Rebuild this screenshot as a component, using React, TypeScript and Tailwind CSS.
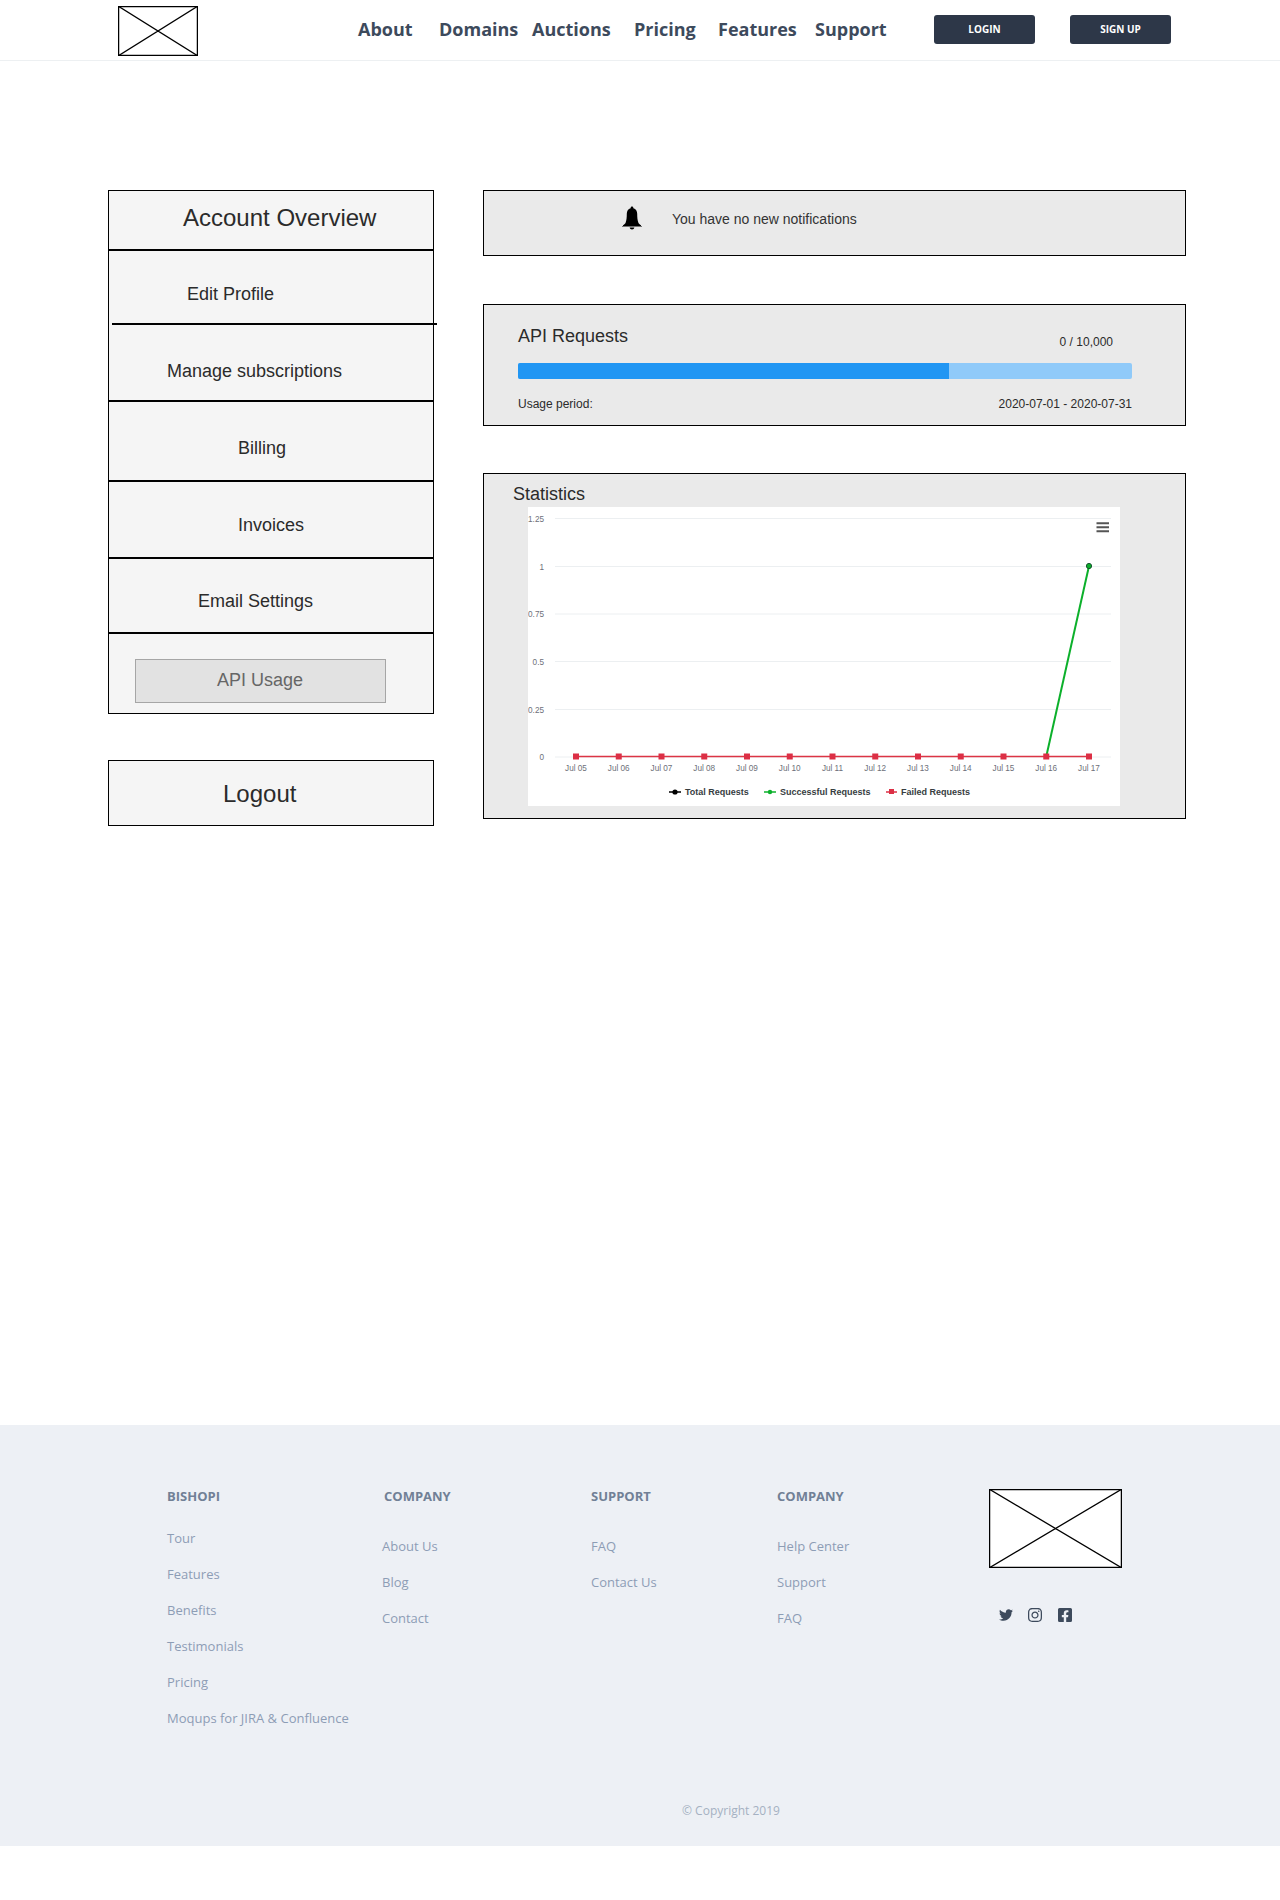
import { FaFacebookSquare, FaInstagram, FaTwitter } from "react-icons/fa";

const days = ["Jul 05", "Jul 06", "Jul 07", "Jul 08", "Jul 09", "Jul 10", "Jul 11", "Jul 12", "Jul 13", "Jul 14", "Jul 15", "Jul 16", "Jul 17"];
const yTicks = [
  { label: "1.25", y: 11.5 },
  { label: "1", y: 59.5 },
  { label: "0.75", y: 107 },
  { label: "0.5", y: 154.5 },
  { label: "0.25", y: 202.5 },
  { label: "0", y: 250 },
];

function Placeholder({ className }: { className: string }) {
  return (
    <svg className={className} viewBox="0 0 100 100" preserveAspectRatio="none">
      <rect x="0" y="0" width="100" height="100" fill="#fff" stroke="#000" strokeWidth="2.5" vectorEffect="non-scaling-stroke" />
      <path d="M0 0L100 100M100 0L0 100" stroke="#000" strokeWidth="1.3" vectorEffect="non-scaling-stroke" fill="none" />
    </svg>
  );
}

function Bell({ className }: { className: string }) {
  return (
    <svg className={className} viewBox="0 0 20 24" fill="#000">
      <path d="M8.6 2.2C8.6 1.2 9.2.5 10 .5s1.4.7 1.4 1.7c2.5.7 3.8 2.8 3.8 5.6 0 3.4.3 6.6 1.2 9 .4 1 1.4 1.8 2.6 2.5v.7H1v-.7c1.2-.7 2.2-1.5 2.6-2.5.9-2.4 1.2-5.6 1.2-9 0-2.8 1.3-4.9 3.8-5.6z" />
      <rect x="0" y="20" width="20" height="0.8" fill="#555" />
      <path d="M7.6 21.6h4.8c-.3 1.2-1.2 2-2.4 2s-2.1-.8-2.4-2z" />
    </svg>
  );
}

function Chart() {
  const xAt = (i: number) => 48 + i * 42.75;
  return (
    <svg className="block w-[592px] h-[299px] bg-white" viewBox="0 0 592 299" fontFamily="'Liberation Sans', sans-serif">
      {yTicks.map((t) => (
        <g key={t.label}>
          <line x1="27" x2="583" y1={t.y} y2={t.y} stroke="#eceff1" />
          <text x="16" y={t.y + 3} textAnchor="end" fontSize="8.2" fill="#6e7079">{t.label}</text>
        </g>
      ))}
      {days.map((d, i) => (
        <text key={d} x={xAt(i)} y="264" textAnchor="middle" fontSize="8.2" fill="#6e7079">{d}</text>
      ))}
      <line x1="48" x2="561" y1="249.5" y2="249.5" stroke="#dc3545" strokeWidth="1.5" />
      <line x1={xAt(11)} y1="249.5" x2={xAt(12)} y2="59" stroke="#0cb02b" strokeWidth="2" />
      {days.map((d, i) => (
        <rect key={d} x={xAt(i) - 3} y="246.5" width="6" height="6" fill="#dc2f45" />
      ))}
      <circle cx={xAt(12)} cy="59" r="2.6" fill="#0cb02b" stroke="#14532d" />

      <g fontSize="9" fontWeight="700" fill="#373d3f">
        <line x1="141" x2="153" y1="285" y2="285" stroke="#000" strokeWidth="1.5" />
        <circle cx="147" cy="285" r="2.6" fill="#000" />
        <text x="157" y="288">Total Requests</text>
        <line x1="236" x2="248" y1="285" y2="285" stroke="#0cb02b" strokeWidth="1.5" />
        <circle cx="242" cy="285" r="2.2" fill="#0cb02b" />
        <text x="252" y="288">Successful Requests</text>
        <line x1="358" x2="369" y1="285" y2="285" stroke="#dc2f45" strokeWidth="1.5" />
        <rect x="361" y="282" width="5" height="5" fill="#dc2f45" />
        <text x="373" y="288">Failed Requests</text>
      </g>

      <path d="M568.5 16.3h12.5M568.5 20.3h12.5M568.5 24.3h12.5" stroke="#555" strokeWidth="2" />
    </svg>
  );
}

function FooterColumn({ title, links, className, listClassName }: { title: string; links: string[]; className: string; listClassName: string }) {
  return (
    <div className={className}>
      <h4 className="text-[13px] leading-[18px] font-bold text-[#718096]">{title}</h4>
      <ul className={`flex flex-col gap-[18px] text-[13px] leading-[18px] text-[#8d9db5] ${listClassName}`}>
        {links.map((l) => (
          <li key={l}>{l}</li>
        ))}
      </ul>
    </div>
  );
}

export default function App() {
  return (
    <div className="w-[1280px] min-h-[1900px] bg-white font-['Liberation_Sans',Arial,sans-serif]">
      {/* Header */}
      <header className="h-[61px] border-b border-[#edf0f2] flex items-start pl-[118px] font-['Open_Sans',sans-serif]">
        <Placeholder className="w-[80px] h-[50px] mt-[6px] shrink-0" />
        <nav className="flex ml-[160px] mt-[17px] text-[18px] leading-[24px] font-bold text-[#3d4a5c]">
          <a className="w-[81px]">About</a>
          <a className="w-[93px]">Domains</a>
          <a className="w-[102px]">Auctions</a>
          <a className="w-[84px]">Pricing</a>
          <a className="w-[97px]">Features</a>
          <a className="w-[119px]">Support</a>
        </nav>
        <button className="w-[101px] h-[29px] mt-[15px] rounded-[3px] bg-[#2d3748] text-white text-[10px] font-bold">LOGIN</button>
        <button className="w-[101px] h-[29px] mt-[15px] ml-[35px] rounded-[3px] bg-[#2d3748] text-white text-[10px] font-bold">SIGN UP</button>
      </header>

      {/* Main */}
      <main className="h-[1364px] pt-[129px] pl-[108px] flex items-start text-[#2b2b2b]">
        {/* Sidebar */}
        <aside className="w-[326px] shrink-0">
          <div className="border border-black bg-[#f5f5f5] h-[524px] text-[18px] leading-[22px]">
            <div className="h-[60px] border-b-2 border-black pl-[74px] pt-[11px] text-[24px] leading-[32px]">Account Overview</div>
            <div className="h-[72px] pl-[78px] pt-[32px]">Edit Profile</div>
            <div className="h-[2px] ml-[3px] -mr-[4px] bg-black"></div>
            <div className="h-[77px] border-b-2 border-black pl-[58px] pt-[35px]">Manage subscriptions</div>
            <div className="h-[80px] border-b-2 border-black pl-[129px] pt-[35px]">Billing</div>
            <div className="h-[77px] border-b-2 border-black pl-[129px] pt-[32px]">Invoices</div>
            <div className="h-[75px] border-b-2 border-black pl-[89px] pt-[31px]">Email Settings</div>
            <div className="pl-[26px] pt-[25px]">
              <div className="w-[251px] h-[44px] border border-[#a6a6a6] bg-[#e2e2e2] text-[#666] pl-[81px] pt-[9px]">API Usage</div>
            </div>
          </div>
          <div className="mt-[46px] h-[66px] border border-black bg-[#f5f5f5] pl-[114px] pt-[17px] text-[24px] leading-[32px]">Logout</div>
        </aside>

        {/* Right column */}
        <section className="ml-[49px] w-[703px] shrink-0">
          <div className="h-[66px] border border-black bg-[#eaeaea] flex pl-[138px] pt-[14px] text-[14px] leading-[28px] text-[#333]">
            <Bell className="w-[20px] h-[24px] mt-[1px]" />
            <span className="ml-[30px]">You have no new notifications</span>
          </div>

          <div className="mt-[48px] h-[122px] border border-black bg-[#eaeaea] pl-[34px]">
            <div className="w-[614px]">
              <div className="h-[58px] flex justify-between">
                <h3 className="mt-[19px] text-[18px] leading-[24px]">API Requests</h3>
                <span className="mt-[29px] mr-[19px] text-[12px] leading-[16px]">0 / 10,000</span>
              </div>
              <div className="h-[16px] rounded-[2px] bg-[#90caf9] overflow-hidden">
                <div className="h-full w-[431px] bg-[#2196f3]"></div>
              </div>
              <div className="mt-[17px] flex justify-between text-[12px] leading-[16px]">
                <span>Usage period:</span>
                <span>2020-07-01 - 2020-07-31</span>
              </div>
            </div>
          </div>

          <div className="mt-[47px] h-[346px] border border-black bg-[#eaeaea] pl-[44px]">
            <h3 className="-ml-[15px] mt-[8px] text-[18px] leading-[24px]">Statistics</h3>
            <div className="mt-[1px]">
              <Chart />
            </div>
          </div>
        </section>
      </main>

      {/* Footer */}
      <footer className="h-[421px] bg-[#edf0f5] font-['Open_Sans',sans-serif] pl-[167px] pt-[62px]">
        <div className="flex items-start h-[315px]">
          <FooterColumn className="w-[217px]" listClassName="mt-[24px]" title="BISHOPI" links={["Tour", "Features", "Benefits", "Testimonials", "Pricing", "Moqups for JIRA & Confluence"]} />
          <FooterColumn className="w-[207px]" listClassName="mt-[32px] -ml-[2px]" title="COMPANY" links={["About Us", "Blog", "Contact"]} />
          <FooterColumn className="w-[186px]" listClassName="mt-[32px]" title="SUPPORT" links={["FAQ", "Contact Us"]} />
          <FooterColumn className="w-[212px]" listClassName="mt-[32px]" title="COMPANY" links={["Help Center", "Support", "FAQ"]} />
          <div className="w-[133px] mt-[2px]">
            <Placeholder className="w-[133px] h-[79px]" />
            <div className="flex items-center gap-[15px] mt-[39px] pl-[10px] text-[#3d4a5c]">
              <FaTwitter className="w-[14px] h-[16px]" />
              <FaInstagram className="w-[14px] h-[16px]" />
              <FaFacebookSquare className="w-[14px] h-[16px] ml-[1px]" />
            </div>
          </div>
        </div>
        <p className="pl-[515px] text-[12px] leading-[18px] text-[#a5b1c2]">© Copyright 2019</p>
      </footer>
    </div>
  );
}
